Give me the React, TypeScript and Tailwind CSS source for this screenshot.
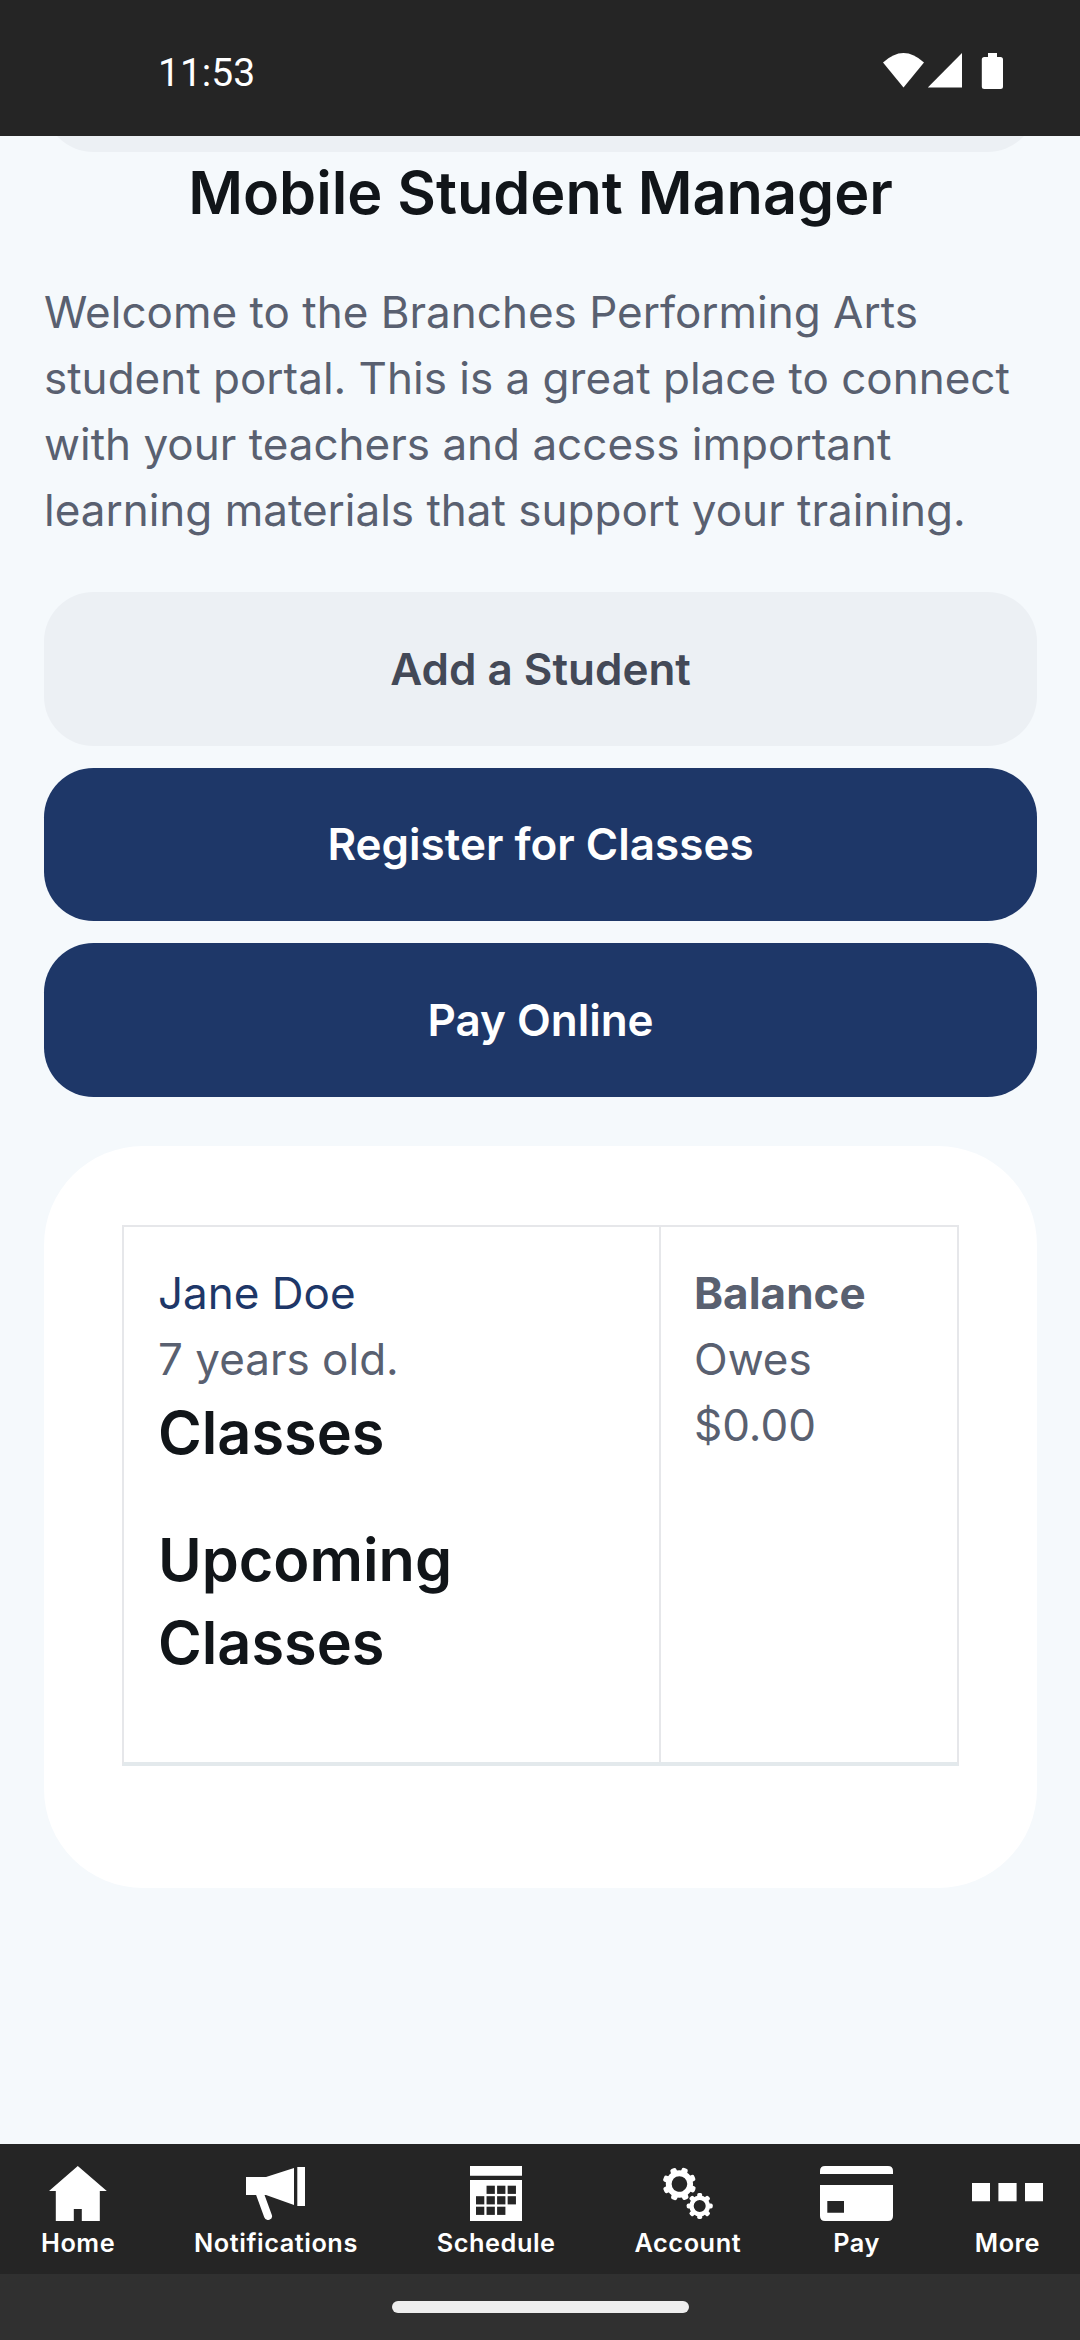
import type { ReactNode } from "react";

type NavItemProps = {
  label: string;
  icon: ReactNode;
};

type ActionButtonProps = {
  label: string;
  secondary?: boolean;
};

type GearProps = {
  cx: number;
  cy: number;
  body: number;
  hole: number;
  reach: number;
  tooth: number;
  offset: number;
};

const HomeIcon = () => (
  <svg width="58" height="55" viewBox="0 0 58 55" fill="white">
    <path d="M28.8 0 57.8 25H50.8V55H32.8V43H24.8V55H6.8V25H0Z" />
  </svg>
);

const MegaphoneIcon = () => (
  <svg width="59" height="55" viewBox="0 0 59 55" fill="white">
    <path d="M0 11H20L48 2V39L20 29H0Z" />
    <path d="M51.3 1H59V40H51.3Z" />
    <path d="M13.6 27 22 50" stroke="white" strokeWidth="8" strokeLinecap="round" />
  </svg>
);

const calendarCells = [
  [1, 0], [2, 0], [3, 0],
  [0, 1], [1, 1], [2, 1], [3, 1],
  [0, 2], [1, 2], [2, 2],
];

const CalendarIcon = () => (
  <svg width="52" height="55" viewBox="0 0 52 55" fill="white">
    <path d="M0 0H52V9.7H0ZM0 14H52V55H0Z" />
    {calendarCells.map(([col, row]) => (
      <rect
        key={`${col}-${row}`}
        x={6 + col * 10.55}
        y={19.7 + row * 10.5}
        width="8.3"
        height="8.2"
        fill="#252525"
      />
    ))}
  </svg>
);

const Gear = ({ cx, cy, body, hole, reach, tooth, offset }: GearProps) => (
  <g transform={`translate(${cx} ${cy}) rotate(${offset})`}>
    {[0, 45, 90, 135, 180, 225, 270, 315].map((angle) => (
      <rect
        key={angle}
        x={-tooth / 2}
        y={-reach}
        width={tooth}
        height={reach - hole - 1}
        rx={tooth / 3}
        transform={`rotate(${angle})`}
        fill="white"
      />
    ))}
    <circle r={(body + hole) / 2} fill="none" stroke="white" strokeWidth={body - hole} />
  </g>
);

const GearsIcon = () => (
  <svg width="50" height="55" viewBox="0 0 50 55">
    <Gear cx={16.4} cy={18} body={13.6} hole={7.8} reach={16.8} tooth={6.4} offset={21} />
    <Gear cx={36.7} cy={40} body={10.4} hole={6} reach={13} tooth={5} offset={0} />
  </svg>
);

const CardIcon = () => (
  <svg width="73" height="55" viewBox="0 0 73 55" fill="white">
    <path d="M0 8V5Q0 0 5 0H68Q73 0 73 5V8Z" />
    <path
      fillRule="evenodd"
      d="M0 19H73V50Q73 55 68 55H5Q0 55 0 50ZM7.3 35V46.7H24V35Z"
    />
  </svg>
);

const MoreIcon = () => (
  <svg width="71" height="55" viewBox="0 0 71 55" fill="white">
    <path d="M0 17H18V35.3H0ZM26.4 17H44.6V35.3H26.4ZM53 17H71V35.3H53Z" />
  </svg>
);

const StatusBar = () => (
  <header className="flex h-[136px] shrink-0 items-center justify-between bg-[#252525] pr-[77px] pl-[158px] pt-[6px]">
    <span className="mt-1 font-[Roboto,sans-serif] text-[39px] leading-[46px] text-white">
      11:53
    </span>
    <svg width="120" height="36" viewBox="0 0 120 36" fill="white">
      <path d="M0 9.5Q20.5-9.5 41 9.5L20.5 34.5Z" />
      <path d="M79 0V34.5H44.8Z" />
      <path d="M105 0H114V4H117.5Q120 4 120 6.5V33.5Q120 36 117.5 36H101.3Q98.8 36 98.8 33.5V6.5Q98.8 4 101.3 4H105Z" />
    </svg>
  </header>
);

const ActionButton = ({ label, secondary }: ActionButtonProps) => (
  <button
    className={`flex h-[153.6px] w-full items-center justify-center rounded-[49.5px] pb-px text-[44px] font-semibold ${
      secondary ? "bg-[#ecf0f4] text-[#434957]" : "bg-[#1e3768] text-white"
    }`}
  >
    {label}
  </button>
);

const StudentCard = () => (
  <section className="mt-[48.7px] h-[742.3px] rounded-[99px] bg-white px-[78px] pt-[79.3px]">
    <div className="flex h-[541px] border-2 border-b-4 border-[#e6e7ea] border-b-[#e3e9ec]">
      <div className="w-[537px] border-r-2 border-[#e6e7ea] pt-[33px] pl-[34px]">
        <a className="block text-[#1e3768]">Jane Doe</a>
        <p>7 years old.</p>
        <h4 className="-mt-px text-[59.4px] leading-[83.2px] font-semibold text-[#111519]">
          Classes
        </h4>
        <h4 className="mt-[43.5px] w-[400px] text-[59.4px] leading-[83.2px] font-semibold text-[#111519]">
          Upcoming Classes
        </h4>
      </div>
      <div className="flex-1 pt-[33px] pl-[33px]">
        <p className="font-bold">Balance</p>
        <p>Owes</p>
        <p>$0.00</p>
      </div>
    </div>
  </section>
);

const NavItem = ({ label, icon }: NavItemProps) => (
  <div className="flex flex-col items-center">
    {icon}
    <span className="mt-[7px] text-[25.3px] leading-[30px] font-semibold tracking-[0.55px] text-white">
      {label}
    </span>
  </div>
);

const BottomNav = () => (
  <nav className="flex h-[130px] shrink-0 justify-between bg-[#252525] pt-[22px] pr-[37px] pl-[41px]">
    <NavItem label="Home" icon={<HomeIcon />} />
    <NavItem label="Notifications" icon={<MegaphoneIcon />} />
    <NavItem label="Schedule" icon={<CalendarIcon />} />
    <NavItem label="Account" icon={<GearsIcon />} />
    <NavItem label="Pay" icon={<CardIcon />} />
    <NavItem label="More" icon={<MoreIcon />} />
  </nav>
);

export default function App() {
  return (
    <div className="flex h-[2340px] w-[1080px] flex-col overflow-hidden bg-[#f5f9fc] font-[Inter,sans-serif] text-[44px] leading-[66px] text-[#596070]">
      <StatusBar />
      <main className="flex-1 overflow-hidden pr-[43px] pl-11">
        {/* tail end of the banner scrolled under the status bar */}
        <div className="h-4 overflow-hidden">
          <div className="-mt-[137px] h-[153px] rounded-[49.5px] bg-[#ecf0f4]" />
        </div>
        <h4 className="-mt-px text-center text-[59.4px] leading-[83.2px] font-semibold text-[#111519]">
          Mobile Student Manager
        </h4>
        <p className="mt-[45px] whitespace-nowrap">
          Welcome to the Branches Performing Arts
          <br />
          student portal. This is a great place to connect
          <br />
          with your teachers and access important
          <br />
          learning materials that support your training.
        </p>
        <div className="mt-[49px] flex flex-col gap-[22px]">
          <ActionButton label="Add a Student" secondary />
          <ActionButton label="Register for Classes" />
          <ActionButton label="Pay Online" />
        </div>
        <StudentCard />
      </main>
      <BottomNav />
      <footer className="flex h-[66px] shrink-0 justify-center bg-[#303030] pt-[27px]">
        <div className="h-3 w-[297px] rounded-full bg-[#eeeeee]" />
      </footer>
    </div>
  );
}
